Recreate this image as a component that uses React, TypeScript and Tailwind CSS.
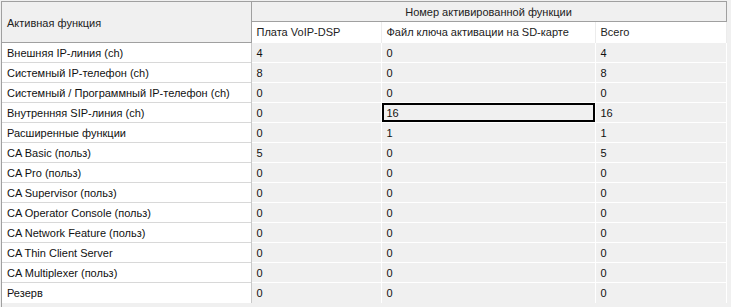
const rows: [string, string, string, string][] = [
  ['Внешняя IP-линия (ch)', '4', '0', '4'],
  ['Системный IP-телефон (ch)', '8', '0', '8'],
  ['Системный / Программный IP-телефон (ch)', '0', '0', '0'],
  ['Внутренняя SIP-линия (ch)', '0', '16', '16'],
  ['Расширенные функции', '0', '1', '1'],
  ['CA Basic (польз)', '5', '0', '5'],
  ['CA Pro (польз)', '0', '0', '0'],
  ['CA Supervisor (польз)', '0', '0', '0'],
  ['CA Operator Console (польз)', '0', '0', '0'],
  ['CA Network Feature (польз)', '0', '0', '0'],
  ['CA Thin Client Server', '0', '0', '0'],
  ['CA Multiplexer (польз)', '0', '0', '0'],
  ['Резерв', '0', '0', '0'],
];

export default function App() {
  return (
    <div
      className="w-[731px] h-[307px] overflow-hidden bg-[#f0f0f0] pt-[1px] text-[11px] text-[#111]"
      style={{ fontFamily: '"Liberation Sans", Arial, sans-serif' }}
    >
      <div className="ml-[1px] h-full border-l border-[#a0a0a0]">
        <table className="table-fixed border-collapse w-[724px]">
          <colgroup>
            <col className="w-[249px]" />
            <col className="w-[130px]" />
            <col className="w-[214px]" />
            <col className="w-[131px]" />
          </colgroup>
          <thead>
            <tr className="h-[20px]">
              <th
                rowSpan={2}
                className="bg-[#f0f0f0] border-t border-r border-b border-[#a0a0a0] text-left font-normal pl-[5px] pt-[2px] text-[#222]"
              >
                Активная функция
              </th>
              <th
                colSpan={3}
                className="bg-[#f0f0f0] border-t border-r border-b border-[#a0a0a0] text-center font-normal text-[#222] p-0 pt-[1px]"
              >
                Номер активированной функции
              </th>
            </tr>
            <tr className="h-[21px]">
              {['Плата VoIP-DSP', 'Файл ключа активации на SD-карте', 'Всего'].map((h) => (
                <th
                  key={h}
                  className="bg-white border-r border-[#ececec] text-left font-normal pl-[5px] p-0 pt-[1px] text-[#222]"
                >
                  {h}
                </th>
              ))}
            </tr>
          </thead>
          <tbody>
            {rows.map((r, i) => (
              <tr key={i} className="h-[20px]">
                <td className="bg-white border-t border-r border-t-[#d8d8d8] border-r-[#c8c8c8] pl-[5px] p-0 pt-[1px] whitespace-nowrap">
                  {r[0]}
                </td>
                {r.slice(1).map((v, j) => (
                  <td
                    key={j}
                    className="relative bg-[#f0f0f0] border-t border-r border-white pl-[5px] p-0 pt-[1px]"
                  >
                    {v}
                    {i === 3 && j === 1 && (
                      <div className="absolute inset-0 border-2 border-black" />
                    )}
                  </td>
                ))}
              </tr>
            ))}
          </tbody>
        </table>
      </div>
    </div>
  );
}
